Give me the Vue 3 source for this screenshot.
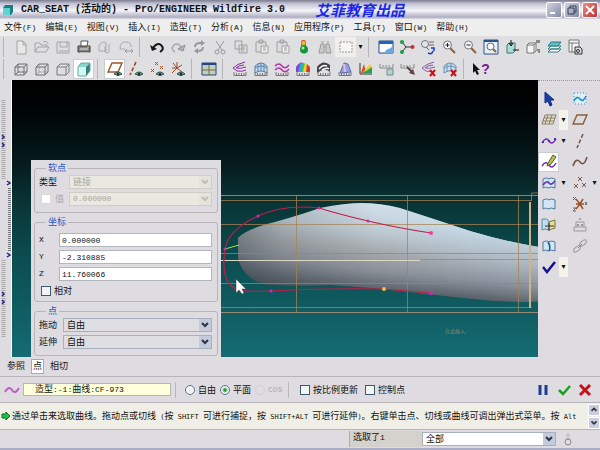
<script setup>
import { h, ref } from 'vue'

// Splits a string so that Latin runs can be set in the narrow monospaced face.
const Mixed = (props) =>
  h('span', { class: 'mixed' }, props.text.split(/([\x20-\x7e]+)/).filter(Boolean).map((part) =>
    /^[\x20-\x7e]/.test(part) ? h('span', { class: 'latin' }, part) : part))
Mixed.props = ['text']

const menus = ['文件(F)', '编辑(E)', '视图(V)', '插入(I)', '造型(T)', '分析(A)', '信息(N)', '应用程序(P)', '工具(T)', '窗口(W)', '帮助(H)']

const ruler = '<path d="M2 11v3.5h12V11M4.500 12v2M7 12v2M9.500 12v2M12 12v2" fill="none" stroke="#777"/>'
const eye = '<path d="M7 13q4-4 8 0q-4 3-8 0z" fill="#9db8b0" stroke="#2c504b"/><circle cx="11" cy="13" r="1.500" fill="#123c38"/>'
const redX = '<path d="M9 9l5 6M14 9l-5 6" stroke="#c8101c" stroke-width="2"/>'
const lens = '<path d="M9 9l5 5" stroke="#8a6242" stroke-width="2"/><circle cx="6.500" cy="6" r="4" fill="#f5f7fa" stroke="#777"/>'
const patch = '<path d="M2 4q5-2 5 0q4-2 7 0v9q-4-2-7 0q-3-2-5 0z" fill="#cfe6f5" stroke="#53789b"/>'

const icons = {
  blank: '<path d="M4 2h6l3 3v10H4zM10 2v4h3" fill="#e8e8e8" stroke="#a5a5a5"/>',
  open: '<path d="M1 13V4h5l1 2h6v2M1 13l3-5h11l-3 5zM9 3q4-2 5 2" fill="none" stroke="#a5a5a5"/>',
  save: '<path d="M2 3h12v11H2zM5 3v5h7V3M4 12h9" fill="none" stroke="#a5a5a5"/>',
  print: '<path d="M5 7V2h7l-1 5" fill="#fff" stroke="#555"/><path d="M2 7h12v6H2z" fill="#858585" stroke="#3d3d3d"/><path d="M4 10h8M4 14h9" stroke="#ddd"/><path d="M11 8h2" stroke="#e3b84a"/>',
  mail: '<path d="M2 12V7q3-6 7-3v8zM12 5v7q0 2-2 2t-2-2V7" fill="none" stroke="#aaa"/>',
  link: '<path d="M2 10q0-8 6-7q5 0 5 5M2 10h5" fill="none" stroke="#aaa"/><path d="M7 12h8M9 10l-2 2 2 2M13 10l2 2-2 2" fill="none" stroke="#999"/>',
  undo: '<path d="M4 9q4-6 8-3q4 4-1 7" fill="none" stroke="#181818" stroke-width="2"/><path d="M1 6l2 6 5-2z" fill="#181818"/>',
  redo: '<path d="M12 9Q8 3 4 6q-4 4 1 7" fill="none" stroke="#a6aaaa" stroke-width="1.500"/><path d="M15 6l-2 6-5-2z" fill="#b5b8b8" stroke="#8e9292"/>',
  refresh: '<path d="M4 8q0-4 5-4h3M12 8q0 4-5 4H6" fill="none" stroke="#9a9a9a" stroke-width="2"/><path d="M10 1l4 3-4 3zM7 9l-4 3 4 3z" fill="#9a9a9a"/>',
  cut: '<path d="M4 2l6 9M12 2L6 11" stroke="#999"/><circle cx="5" cy="13" r="2" fill="none" stroke="#999"/><circle cx="11" cy="13" r="2" fill="none" stroke="#999"/>',
  copy: '<path d="M2 2h7v8H2zM6 6h8v8H6zM8 8h4M8 10h4M8 12h3" fill="#ddd" stroke="#a0a0a0"/>',
  paste: '<path d="M2 3h10v10H2zM5 1h4v3H5z" fill="#ddd" stroke="#a0a0a0"/><path d="M7 7h7v7H7zM9 9h3M9 11h3" fill="#eee" stroke="#a0a0a0"/>',
  regen: '<rect x="5" y="1" width="5" height="10" rx="2" fill="#d35b25"/><circle cx="7.500" cy="4" r="2" fill="#e9c23c"/><circle cx="8" cy="10.500" r="4" fill="#17933b"/><circle cx="7" cy="9" r="1.500" fill="#a7eaaa"/>',
  find: '<path d="M2 14l2-9h3v9zM9 14V5h3l2 9zM7 8h2M4 3h3M10 3h2" fill="#ccc" stroke="#999"/>',
  marquee: '<rect x="2" y="3" width="12" height="10" fill="#f6f6f2" stroke="#999" stroke-dasharray="2 1"/>',
  repaint: '<path d="M1 2h14v12H1z" fill="#fff" stroke="#1c4b8c"/><path d="M1 2h14v3H1z" fill="#2366b3"/><path d="M15 6q-1 3-5 4q-3 1-3 4h8z" fill="#6aa7e0"/>',
  spin: '<path d="M3 3l4 5-4 5M7 8h6" fill="none" stroke="#333"/><circle cx="3" cy="3" r="2" fill="#1d9a45"/><circle cx="3" cy="13" r="2" fill="#1d9a45"/><circle cx="13.500" cy="8" r="2" fill="#cf2a38"/>',
  orient: '<circle cx="5" cy="5" r="3.500" fill="#dfe6ee" stroke="#777"/><path d="M9 3h5M9 6h5M6 8l3 3" stroke="#667"/><path d="M8 14q4 2 5-2M11 9h3v3" fill="none" stroke="#1d3fc0" stroke-width="1.500"/>',
  zoomIn: lens + '<path d="M4.500 6h4M6.500 4v4" stroke="#222"/>',
  zoomOut: lens + '<path d="M4.500 6h4" stroke="#222"/>',
  fit: '<path d="M1 1h14v14H1z" fill="#e9eff5" stroke="#2a558c"/><path d="M1 1h14v2H1z" fill="#2a558c"/><path d="M10 10l3 3" stroke="#8a6242" stroke-width="2"/><circle cx="7.500" cy="7.500" r="3.500" fill="#fff" stroke="#567"/>',
  datum: '<path d="M3 6l2-2h6v8l-2 2H3z" fill="#a8dfd7" stroke="#47736c"/><path d="M7 1v5M5 4l2 3 2-3M15 11H9" fill="none" stroke="#111"/>',
  views: '<path d="M2 6h7v8H2zM2 6l2-2h7v8l-2 2M9 6l2-2" fill="#f5f5f5" stroke="#777"/><path d="M12 1v3M14 1v3M12 11h3M13 13h2" fill="none" stroke="#333"/>',
  layers: '<path d="M2 13l3-3h10l-3 3zM2 10l3-3h10l-3 3z" fill="#fff" stroke="#2b7b82"/><path d="M2 7l3-4h10l-3 4z" fill="#61bdc0" stroke="#2b7b82"/>',
  tree: '<path d="M2 1h10v12H2zM2 4h10M5 4v9" fill="#f5f5f5" stroke="#777"/><path d="M8 8h5l2 2v5H8z" fill="#ddd" stroke="#333"/><circle cx="11" cy="12" r="1.500" fill="none" stroke="#333"/>',
  wire: '<path d="M2 6h9v8H2zM5 3h9v8H5zM2 6l3-3M11 6l3-3M2 14l3-3M11 14l3-3" fill="none" stroke="#6e6e6e"/>',
  hidden: '<path d="M5 3v8h9M2 14l3-3" fill="none" stroke="#aaa"/><path d="M2 6h9v8H2zM2 6l3-3h9v8l-3 3M11 6l3-3" fill="none" stroke="#6e6e6e"/>',
  nohidden: '<path d="M2 6h9v8H2zM2 6l3-3h9v8l-3 3M11 6l3-3" fill="none" stroke="#7a7a7a"/>',
  shaded: '<path d="M2 6h8v9H2z" fill="#d0fbf5"/><path d="M2 6l3-4h9l-4 4z" fill="#87d9d0"/><path d="M10 6l4-4v8l-4 5z" fill="#35807b"/><path d="M2 6l3-4h9v8l-4 5H2z" fill="none" stroke="#5fa8a0"/>',
  planes: '<path d="M5 2h10l-4 9H1z" fill="none" stroke="#9c5a2c" stroke-width="1.500"/>' + eye,
  axes: '<path d="M8 1L2 14" stroke="#9c3f24" stroke-width="1.500" stroke-dasharray="4 2"/>' + eye,
  points: '<path d="M2 8l3 3M5 8l-3 3M6 1l3 3M9 1L6 4M11 5l3 3M14 5l-3 3" stroke="#a0542d"/>' + eye,
  csys: '<path d="M3 2l4 5 5-3M7 7l-5 5M7 7l5 4M2 7h5M7 7V1" fill="none" stroke="#97482c"/>' + eye,
  grid: '<path d="M1 2h14v12H1z" fill="#c7cdb6" stroke="#254880"/><path d="M1 2h14v2H1z" fill="#254880"/><path d="M8 4v10M1 9h14" stroke="#686f58"/>',
  curvature: '<path d="M13 1Q5 3 1 7l4 3q5 1 9-1M12 4Q7 4 4 7q4 1 10-1" fill="none" stroke="#8d2ca8"/>' + ruler,
  section: '<path d="M2 12V5q6-6 12 0v7q-6-4-12 0zM5 3v8M8 2v8M11 3v8M2 7q6-4 12 0" fill="#c4def2" stroke="#5a7fa8"/>' + ruler,
  waves: '<path d="M1 5q4-4 7 0t7-1M1 9q4-4 7 0t7-1" fill="none" stroke="#b336a7" stroke-width="1.500"/>' + ruler,
  rainbow: '<path d="M1 11V6q4-6 7-4l-3 9z" fill="#8b3fd2"/><path d="M3 11l2-8q3-2 4-1l-2 9z" fill="#28a9dd"/><path d="M6 11l2-9 3 1-2 8z" fill="#35c55a"/><path d="M8 11l2-9 3 2-2 7z" fill="#f1d12b"/><path d="M11 11l1-8 3 3v5z" fill="#dd3829"/>' + ruler,
  reflect: '<path d="M1 12V6q6-8 13-2v7q-5-5-13 1z" fill="#444"/><path d="M3 8q4-5 8-3M6 9q5-3 7-1" stroke="#fff" stroke-width="1.500" fill="none"/>' + ruler,
  draft: '<path d="M3 12l4-10 4 1 3 8z" fill="#8ea0e0" stroke="#5c6aae"/><path d="M7 3l1 8" stroke="#e8b8d8" stroke-width="2"/>' + ruler,
  slope: '<path d="M2 2v11h12" fill="none" stroke="#333"/><path d="M3 12l3-9 2 9z" fill="#db4224"/><path d="M4 12l8-9 2 3z" fill="#edcf32"/><path d="M5 12l9-6v6z" fill="#2a9d59"/>',
  saved: '<path d="M1 3v4h13V3M4 4v2M7 4v2M10 4v2" stroke="#888" fill="none"/><path d="M8 8h6v6H8z" fill="#b8d0cc" stroke="#6d9290"/>',
  hide: '<path d="M1 3v4h13V3M4 4v2M7 4v2M10 4v2" stroke="#888" fill="none"/><path d="M7 6l5 5" stroke="#5c4440" stroke-width="2"/><path d="M15 14l-6-2 4-4z" fill="#5c4440"/>',
  delCurve: '<path d="M13 1Q5 3 1 7l4 3q3 1 6 0M12 4Q7 4 4 7q4 1 10-1" fill="none" stroke="#8d5aa8"/>' + redX,
  delSection: '<path d="M2 12V5q6-6 12 0v6q-6-3-12 1zM5 3v8M9 2v8M2 7q6-4 12 0" fill="#c4def2" stroke="#6d90b4"/>' + redX,
  arrow: '<path d="M4 1v11l3-2 2 5 2-1-2-5h4z" fill="#173caf" stroke="#102a78"/>',
  activeCurve: '<rect x="2" y="2" width="12" height="11" fill="#dceef7" stroke="#3a91c5" stroke-dasharray="1 2"/><path d="M2 10q3-6 6-2t6-3" fill="none" stroke="#1688c3" stroke-width="1.500"/>',
  activePlane: '<path d="M4 3h11l-3 9H1zM7 3l-3 9M11 3l-3 9M3 6h11M2 9h11" fill="#e8dfc8" stroke="#8b7f68"/>',
  plane: '<path d="M5 3h10l-4 9H1z" fill="none" stroke="#8a603e" stroke-width="1.500"/>',
  curve: '<path d="M1 10q4-7 7-2t7-2" fill="none" stroke="#8126bc" stroke-width="1.500"/><path d="M1 9h2M7 8h2M13 6h2" stroke="#3b38b5" stroke-width="2"/>',
  axis: '<path d="M11 1L5 15" stroke="#735344" stroke-width="1.500" stroke-dasharray="4 2"/>',
  editCurve: '<path d="M1 12q4-6 7-1t7-2" fill="none" stroke="#8126bc" stroke-width="1.500"/><path d="M7 9l5-8 3 2-5 7-4 2z" fill="#bdc34a" stroke="#555d29"/>',
  sketch: '<path d="M1 12Q4 3 8 8t7-5" fill="none" stroke="#765441" stroke-width="1.500"/>',
  drop: patch + '<path d="M2 10q4-5 6-2t6-2" fill="none" stroke="#6936b5" stroke-width="1.500"/>',
  point: '<path d="M2 9l4 4M6 9l-4 4M6 2l4 4M10 2L6 6M10 8l4 4M14 8l-4 4" stroke="#7b5948"/>',
  surface: patch,
  coord: '<path d="M8 8h4M8 8l3-5M8 8L4 3M8 8l-4 5M8 8l3 5M8 8H4" stroke="#a04f25" stroke-width="1.500"/><path d="M1 1l3 3M4 1L1 4M1 12h3l-3 3h3M13 6l2 3M15 6l-2 3" fill="none" stroke="#6a6561"/>',
  connect: '<path d="M1 2q5-1 7 2v9q-4-2-7 0z" fill="#bddcf0" stroke="#61889c"/><path d="M8 5l6-2v8l-6 2z" fill="#e6df99" stroke="#79753e"/><path d="M4 9h9M8 6v8" stroke="#333"/>',
  analysis: '<path d="M2 10v4h12v-4zM4 10V5h8v5M7 3l1-2 1 2M5 7l2 2M7 7l-2 2M9 7l2 2M11 7l-2 2" fill="none" stroke="#999"/>',
  trim: patch + '<path d="M7 4q3 4 1 9" fill="none" stroke="#175a7f" stroke-width="1.500"/>',
  chain: '<ellipse cx="5" cy="11" rx="4" ry="2" transform="rotate(-40 5 11)" fill="none" stroke="#999"/><ellipse cx="11" cy="5" rx="4" ry="2" transform="rotate(-40 11 5)" fill="none" stroke="#999"/><path d="M6 10l4-4" stroke="#888"/>',
  tick: '<path d="M2 8l4 5 8-10" fill="none" stroke="#11118f" stroke-width="2.500"/>'
}

const fileTools = [
  ['blank', 'open', 'save', 'print', 'mail', 'link'],
  ['undo', 'redo', 'refresh', 'cut', 'copy', 'paste', 'paste', 'regen', 'find', 'marquee', '>'],
  ['repaint', 'spin', 'orient', 'zoomIn', 'zoomOut', 'fit', 'datum', 'views', 'layers', 'tree']
]
const viewTools = [
  ['wire', 'hidden', 'nohidden', 'shaded'],
  ['planes', 'axes', 'points', 'csys'],
  ['grid'],
  ['curvature', 'section', 'waves', 'rainbow', 'reflect', 'draft', 'slope', 'saved', 'hide', 'delCurve', 'delSection']
]
const pressed = ['shaded', 'planes', 'editCurve']
// left icon, has a fly-out, right icon, has a fly-out
const sideTools = [
  ['arrow', 0, 'activeCurve', 0], ['activePlane', 1, 'plane', 0], ['curve', 1, 'axis', 0],
  ['editCurve', 0, 'sketch', 0], ['drop', 1, 'point', 1], ['surface', 0, 'coord', 0],
  ['connect', 0, 'analysis', 0], ['trim', 0, 'chain', 0], ['tick', 1, '', 0]
]

const coords = ref([['X', '0.000000'], ['Y', '-2.310885'], ['Z', '11.760066']])
const mode = ref('plane')
</script>

<template>
  <div class="app">
    <header class="titlebar">
      <svg class="logo" viewBox="0 0 12 12"><path d="M1 4l2-3h8v7l-2 3H1z" fill="#1d7f86" /><path d="M1 4h7v7H1z" fill="#5fd3cd" /></svg>
      <h1><Mixed text="CAR_SEAT (活动的) - Pro/ENGINEER Wildfire 3.0" /></h1>
      <span class="brand">艾菲教育出品</span>
      <div class="winbtns">
        <button aria-label="最小化"><svg viewBox="0 0 14 14"><path d="M3 10h5" stroke="#fff" stroke-width="2" /></svg></button>
        <button aria-label="还原"><svg viewBox="0 0 14 14"><path d="M5 5V3h6v6H9M3 5h6v6H3z" fill="none" stroke="#333e5c" /></svg></button>
        <button class="close" aria-label="关闭"><svg viewBox="0 0 14 14"><path d="M3 3l8 8M11 3l-8 8" stroke="#fff" stroke-width="2" /></svg></button>
      </div>
    </header>

    <nav class="menubar">
      <button v-for="m in menus" :key="m"><Mixed :text="m" /></button>
    </nav>

    <div class="toolbar">
      <div v-for="(group, g) in fileTools" :key="g" class="group">
        <template v-for="(name, i) in group" :key="i">
          <button v-if="name === '>'" class="drop" aria-label="更多">▾</button>
          <button v-else class="tool" :class="{ on: pressed.includes(name), pale: name === 'marquee' }" :aria-label="name"><svg viewBox="0 0 16 16" v-html="icons[name]" /></button>
        </template>
      </div>
    </div>
    <div class="toolbar">
      <div v-for="(group, g) in viewTools" :key="g" class="group">
        <button v-for="name in group" :key="name" class="tool" :class="{ on: pressed.includes(name) }" :aria-label="name"><svg viewBox="0 0 16 16" v-html="icons[name]" /></button>
      </div>
      <div class="group">
        <button class="tool help" aria-label="上下文帮助"><svg viewBox="0 0 10 16"><path d="M2 2v10l2-2 2 4 2-1-2-4h3z" fill="#111" /></svg>?</button>
      </div>
    </div>

    <main class="work">
      <aside class="rail">
        <svg viewBox="0 0 12 277" preserveAspectRatio="xMinYMin slice">
          <path d="M11.500 0v277" stroke="#fff" />
          <path d="M3.500 20v80M3.500 180v78" stroke="#a9a9a9" stroke-width="4" stroke-dasharray="1 1" />
          <path d="M9.500 108v64" stroke="#77777f" stroke-width="3" stroke-dasharray="1 1" />
          <path d="M2 55l2 2-2 2M2 63l2 2-2 2M7 101l3 2-3 2M7 173l3 2-3 2M2 212l2 2-2 2M2 220l2 2-2 2" fill="none" stroke="#24248c" stroke-width="1.500" />
        </svg>
      </aside>

      <section class="viewport">
        <svg class="scene" viewBox="12 80 526 277" preserveAspectRatio="xMinYMin slice">
          <defs>
            <linearGradient id="body" gradientUnits="userSpaceOnUse" x1="380" y1="203" x2="368" y2="300">
              <stop offset="0" stop-color="#d3e1ea" /><stop offset=".3" stop-color="#bdc9d2" />
              <stop offset=".5" stop-color="#a5a9ac" /><stop offset=".7" stop-color="#898f97" />
              <stop offset=".85" stop-color="#636a73" /><stop offset="1" stop-color="#434c52" />
            </linearGradient>
            <linearGradient id="nose" x1="0" x2="1"><stop offset="0" stop-color="#303e44" stop-opacity=".4" /><stop offset=".15" stop-color="#46535b" stop-opacity=".18" /><stop offset=".45" stop-color="#59636a" stop-opacity="0" /></linearGradient>
            <linearGradient id="tail" gradientUnits="userSpaceOnUse" x1="440" y1="225" x2="432" y2="297">
              <stop offset="0" stop-color="#c6dbe8" /><stop offset=".4" stop-color="#adb7c0" /><stop offset=".7" stop-color="#8b949e" /><stop offset="1" stop-color="#51585f" />
            </linearGradient>
            <linearGradient id="fade"><stop offset=".45" stop-color="#fff" stop-opacity="0" /><stop offset=".8" stop-color="#fff" /></linearGradient>
            <mask id="right"><rect x="236" y="190" width="310" height="120" fill="url(#fade)" /></mask>
            <filter id="soft"><feGaussianBlur stdDeviation=".6" /></filter>
            <path id="seat" d="M238 258V238Q246 229 275 222Q300 215 320 208Q345 203 362 203Q380 203 400 208Q440 221 470 231Q510 243 545 248V301Q510 303 475 299Q435 295 400 291Q365 287 330 285Q290 287 262 284Q243 277 238 258Z" />
          </defs>
          <g filter="url(#soft)">
            <use href="#seat" fill="url(#body)" />
            <use href="#seat" fill="url(#tail)" mask="url(#right)" />
            <use href="#seat" fill="url(#nose)" />
          </g>
          <g fill="none" stroke="#a78352" stroke-opacity=".75">
            <path d="M221 195.500h317M221 312.500h317" stroke="#c39c78" />
            <path d="M221 200.500h311M221 224.500h317M221 253.500h317M221 283.500h317M221 307.500h311M296.500 195v117M407.500 195v117M518.500 195v117" />
            <path d="M420 259.500h118" /><path d="M221 260.500h199" stroke="#dcd6c8" stroke-opacity="1" />
            <path d="M530 202v106" stroke="#d0b180" stroke-width="2" stroke-opacity="1" /><path d="M531.500 200v-7h7" />
          </g>
          <path d="M431 233Q398 228 368 221T319 208Q285 204 258 216Q228 230 225 249C222 270 224 287 240 290Q251 292 271 291Q325 288 384 289L430 293" fill="none" stroke="#c41c48" stroke-width="1.200" />
          <path d="M225 249l14-4" stroke="#a4e044" />
          <g fill="#c92bb8"><circle cx="225" cy="249" r="1.500" /><circle cx="258" cy="216" r="1.500" /><circle cx="319" cy="208" r="1.500" /><circle cx="368" cy="221" r="1.500" /><circle cx="271" cy="291" r="1.500" /><circle cx="431" cy="233" r="2" fill="#f03bb0" /><circle cx="431" cy="293" r="2" /></g>
          <circle cx="384" cy="289" r="2" fill="#f6bd3e" />
          <text x="445" y="333" font-size="5" fill="#8b8474">在此插入</text>
          <path d="M236 279v14l3-3 3 4 2-1-2-4h4z" fill="#fff" stroke="#33474c" stroke-width=".5" />
        </svg>

        <form class="panel" @submit.prevent>
          <fieldset>
            <legend>软点</legend>
            <div class="field wide"><label for="kind">类型</label><span class="select"><select id="kind" disabled><option>链接</option></select><svg viewBox="0 0 12 12"><path d="M3 4l3 3 3-3" /></svg></span></div>
            <div class="field wide"><label class="dim"><input type="checkbox" disabled>值</label><span class="select"><select class="mono" aria-label="值" disabled><option>0.000000</option></select><svg viewBox="0 0 12 12"><path d="M3 4l3 3 3-3" /></svg></span></div>
          </fieldset>
          <fieldset class="coords">
            <legend>坐标</legend>
            <div v-for="c in coords" :key="c[0]" class="field coord"><label class="axis" :for="'c' + c[0]">{{ c[0] }}</label><input :id="'c' + c[0]" v-model="c[1]" type="text"></div>
            <label class="check"><input type="checkbox">相对</label>
          </fieldset>
          <fieldset>
            <legend>点</legend>
            <div class="field"><label for="drag">拖动</label><span class="select"><select id="drag"><option>自由</option></select><svg viewBox="0 0 12 12"><path d="M3 4l3 3 3-3" /></svg></span></div>
            <div class="field"><label for="ext">延伸</label><span class="select"><select id="ext"><option>自由</option></select><svg viewBox="0 0 12 12"><path d="M3 4l3 3 3-3" /></svg></span></div>
          </fieldset>
        </form>
      </section>

      <aside class="side">
        <div v-for="(row, r) in sideTools" :key="r" class="siderow">
          <template v-for="k in [0, 2]" :key="k">
            <button v-if="row[k]" class="tool" :class="{ on: pressed.includes(row[k]) }" :aria-label="row[k]"><svg viewBox="0 0 16 16" v-html="icons[row[k]]" /></button>
            <span v-else />
            <button v-if="row[k + 1]" class="drop" :class="{ lit: k === 0 && (r === 1 || r === 8) }" aria-label="更多">▾</button>
            <span v-else />
          </template>
        </div>
      </aside>
    </main>

    <div class="tabs"><button>参照</button><button class="current">点</button><button>相切</button></div>

    <div class="dash">
      <svg class="wave" viewBox="0 0 16 10"><path d="M1 7q4-7 7-2t7-2" fill="none" stroke="#c05ac4" stroke-width="2" /></svg>
      <output class="feature"><Mixed text="造型:-1:曲线:CF-973" /></output>
      <i class="rule" />
      <div class="radios">
        <label><input v-model="mode" type="radio" name="mode" value="free">自由</label>
        <label><input v-model="mode" type="radio" name="mode" value="plane">平面</label>
        <label class="dim"><input type="radio" name="mode" value="cos" disabled><Mixed text="COS" /></label>
      </div>
      <i class="rule" />
      <label class="check"><input type="checkbox">按比例更新</label>
      <label class="check"><input type="checkbox">控制点</label>
      <div class="finish">
        <button aria-label="暂停"><svg viewBox="0 0 14 14"><path d="M4 2v10M10 2v10" stroke="#1d3c94" stroke-width="3" /></svg></button>
        <button aria-label="确定"><svg viewBox="0 0 14 14"><path d="M2 7l4 4 7-8" fill="none" stroke="#18a01e" stroke-width="2.500" /></svg></button>
        <button aria-label="取消"><svg viewBox="0 0 14 14"><path d="M2 2l10 10M12 2L2 12" stroke="#c5121a" stroke-width="3" /></svg></button>
      </div>
    </div>

    <div class="message">
      <svg class="go" viewBox="0 0 10 10"><path d="M1 3h4V1l4 4-4 4V7H1z" fill="#25c04c" stroke="#126a2b" /></svg>
      <p class="dense"><Mixed text="通过单击来选取曲线。拖动点或切线 (按 SHIFT 可进行捕捉，按 SHIFT+ALT 可进行延伸)。右键单击点、切线或曲线可调出弹出式菜单。按 Alt" /></p>
      <div class="scroll">
        <button aria-label="向上"><svg viewBox="0 0 12 12"><path d="M3 7l3-3 3 3" /></svg></button>
        <button aria-label="向下"><svg viewBox="0 0 12 12"><path d="M3 4l3 3 3-3" /></svg></button>
      </div>
    </div>

    <footer class="status">
      <span class="picked"><Mixed text="选取了1" /></span>
      <span class="select"><select aria-label="过滤器"><option>全部</option></select><svg viewBox="0 0 12 12"><path d="M3 4l3 3 3-3" /></svg></span>
      <svg class="lamp" viewBox="0 0 8 14"><path d="M4 1v7M2 3h4M2 6h4" stroke="#bbb" /><circle cx="4" cy="10" r="3" fill="#ddd" stroke="#888" /></svg>
    </footer>
  </div>
</template>

<style>
body { margin: 0; }
.mixed { white-space: pre; }
.mixed .latin { font-family: "Liberation Mono", monospace; font-size: 8px; }
h1 .mixed .latin { font-size: 10px; }
.dense .mixed .latin { font-family: "DejaVu Sans Mono", monospace; font-size: 7px; }
</style>

<style scoped>
.app { display: flex; flex-direction: column; min-height: 100vh; box-sizing: border-box; overflow: hidden; background: #dedce1; border-bottom: 2px solid #a9acc4; font: 9px/12px "Liberation Sans", "Noto Sans CJK SC", sans-serif; color: #111; }
.app * { box-sizing: border-box; }
button { padding: 0; border: 0; background: none; font: inherit; color: inherit; }
svg { display: block; }
input { margin: 0; }

.titlebar { display: flex; align-items: center; height: 19px; padding: 0 2px; background: linear-gradient(#7d7d92, #c4c4d4 20%, #f4f4fa 55%, #aeaec2 90%, #dcdce4); }
.logo { width: 12px; height: 12px; margin-right: 7px; }
h1 { flex: none; width: 294px; margin: 0; font-size: 10px; font-weight: bold; }
.brand { font: italic 700 15px/18px "Noto Sans CJK SC", sans-serif; color: #1a28e8; white-space: nowrap; }
.winbtns { display: flex; gap: 2px; margin-left: auto; }
.winbtns button { width: 16px; height: 16px; border: 1px solid #fff; border-radius: 2px; background: linear-gradient(135deg, #d0d2e0, #8488a5); }
.winbtns .close { background: linear-gradient(135deg, #f08a80, #b83434); }

.menubar { display: flex; gap: 9px; height: 17px; padding: 0 4px; background: #efeeee; }
.menubar button { line-height: 16px; }

.toolbar { display: flex; align-items: center; height: 22px; padding-left: 3px; background: #dfdee1; }
.group { display: flex; align-items: center; margin-right: 3px; padding-left: 6px; border-left: 1px solid #b5b4b8; }
.tool { display: flex; align-items: center; justify-content: center; width: 21px; height: 20px; flex: none; }
.tool svg { width: 16px; height: 16px; }
.tool.on { background: #fff; border: 1px solid #c9cdd0; }
.tool.pale { background: #efeeea; }
.drop { width: 9px; height: 20px; font: 8px/20px "DejaVu Sans", sans-serif; }
.drop.lit { background: #f4f3ea; }
.help { font: bold 14px/16px "Liberation Sans", sans-serif; color: #7c1c8c; }
.help svg { width: 10px; height: 16px; }

.work { display: flex; flex: 1; min-height: 277px; }
.rail { flex: none; width: 12px; overflow: hidden; }
.rail svg { width: 12px; height: 100%; }
.viewport { position: relative; display: flex; flex: 1; align-items: flex-end; padding-left: 19px; background: linear-gradient(#000 0, #000506 12%, #061b1d 30%, #093536 45%, #0b4b4e 62%, #0f5a5f 80%, #156b73); }
.scene { position: absolute; inset: 0; width: 100%; height: 100%; }
.side { flex: none; width: 62px; padding-top: 8px; border-top: 1px dotted #999; }
.siderow { display: grid; grid-template-columns: 21px 10px 21px 8px; height: 21px; }

.panel { position: relative; display: flex; flex-direction: column; gap: 3px; width: 190px; padding: 2px 3px 1px; background: #dedce1; }
fieldset { display: flex; flex-direction: column; gap: 3px; min-width: 0; margin: 0; padding: 1px 5px 6px 4px; border: 1px solid #b9b5b6; border-radius: 3px; }
.coords { padding-top: 5px; padding-bottom: 3px; }
legend { margin-left: 7px; padding: 0 2px; color: #1c55cb; }
.field { display: flex; align-items: center; height: 14px; }
.field label { flex: none; width: 24px; line-height: 12px; white-space: nowrap; }
.field.wide label { width: 30px; }
.field.coord label { width: 20px; }
.field label.axis { font: 8px/12px "Liberation Mono", monospace; }
label.dim { display: flex; align-items: center; color: #a9a8aa; }
.dim input { margin: 0 4px 0 2px; }
.select { position: relative; display: flex; flex: 1; height: 14px; }
select { width: 100%; height: 100%; padding: 0 3px; border: 1px solid #a6b1bd; border-radius: 0; appearance: none; background: #dedde2; color: #111; font: 9px/12px "Noto Sans CJK SC", sans-serif; }
select.mono, input[type="text"] { font: 8px/12px "Liberation Mono", monospace; }
.select svg { position: absolute; top: 1px; right: 1px; width: 12px; height: 12px; background: #c3cadb; pointer-events: none; }
.select path, .scroll path { fill: none; stroke: #2f3443; stroke-width: 2; }
select:disabled { border-color: #cfcec5; background: #e9e8e1; color: #a8a79b; opacity: 1; }
select:disabled + svg { background: #e5e4da; }
select:disabled + svg path { stroke: #c0bfb2; }
input[type="text"] { flex: 1; min-width: 0; height: 14px; padding: 0 2px; border: 1px solid #b1b6bc; background: #fff; color: #111; }
input[type="checkbox"] { flex: none; width: 10px; height: 10px; appearance: none; border: 1px solid #40586c; background: #f2f5f5; }
input[type="checkbox"]:disabled { border-color: #d8d7d0; background: #fff; }
input[type="radio"] { flex: none; width: 10px; height: 10px; appearance: none; border: 1px solid #5b7588; border-radius: 50%; background: #f2f5f5; }
input[type="radio"]:checked { background: radial-gradient(#279b3c 1px, #f2f5f5 3px); }
input[type="radio"]:disabled { border-color: #d0cfd2; background: #dedce1; }
.check { display: flex; align-items: center; gap: 3px; height: 14px; white-space: nowrap; }
.check input { margin-left: 2px; }

.tabs { display: flex; align-items: center; gap: 6px; height: 20px; padding-left: 7px; border-bottom: 1px solid #b6b4b8; }
.tabs button { line-height: 13px; }
.tabs .current { width: 13px; background: #fff; border: 1px solid #aaa; }

.dash { display: flex; align-items: center; height: 26px; padding: 0 8px 0 4px; border-bottom: 1px solid #b6b4b8; white-space: nowrap; }
.wave { width: 16px; height: 10px; margin-right: 3px; }
.feature { flex: none; width: 148px; padding: 0 11px; background: #ffffdc; border: 1px solid #b4b7ac; line-height: 10px; }
.rule { width: 1px; height: 16px; margin: 0 9px 0 4px; background: #b9b7bb; }
.radios { display: flex; gap: 4px; width: 99px; }
.radios label { display: flex; align-items: center; gap: 3px; }
.radios .dim input { margin: 0; }
.dash .check { margin-right: 5px; }
.finish { display: flex; gap: 7px; margin-left: auto; }
.finish svg { width: 14px; height: 14px; }

.message { display: flex; align-items: center; height: 27px; padding-left: 1px; background: #efefe7; border-bottom: 1px solid #b6b4b8; }
.go { flex: none; width: 10px; height: 10px; }
.message p { flex: 1; min-width: 0; margin: 0; padding-left: 1px; overflow: hidden; white-space: nowrap; }
.scroll { display: grid; gap: 1px; width: 12px; }
.scroll button { width: 12px; height: 12px; background: #c9cddd; border: 1px solid #fff; }

.status { display: flex; align-items: center; justify-content: flex-end; height: 18px; padding-right: 28px; }
.picked { width: 73px; height: 16px; padding-left: 3px; border-left: 1px solid #aaa; background: #d5d1cd; }
.status .select { flex: none; width: 134px; }
.status select { background: #fff; }
.lamp { width: 8px; height: 14px; margin-left: 8px; }
</style>
